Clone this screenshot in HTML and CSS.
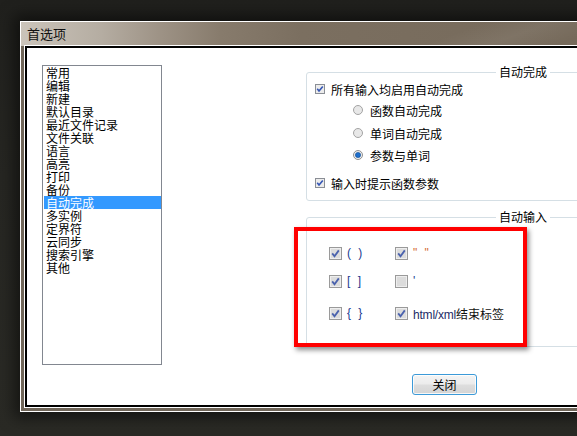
FILE: index.html
```html
<!DOCTYPE html>
<html lang="zh-CN">
<head>
<meta charset="utf-8">
<title>首选项</title>
<link rel="stylesheet" href="styles.css">
</head>
<body>
<div class="window">
  <div class="titlebar">首选项</div>
  <div class="client">
    <ul class="list">
      <li>常用</li>
      <li>编辑</li>
      <li>新建</li>
      <li>默认目录</li>
      <li>最近文件记录</li>
      <li>文件关联</li>
      <li>语言</li>
      <li>高亮</li>
      <li>打印</li>
      <li>备份</li>
      <li class="sel">自动完成</li>
      <li>多实例</li>
      <li>定界符</li>
      <li>云同步</li>
      <li>搜索引擎</li>
      <li>其他</li>
    </ul>
    <div class="right">
      <div class="group g1">
        <span class="legend">自动完成</span>
        <div class="row r1">
          <svg class="cb" width="10" height="10" viewBox="0 0 10 10"><rect x=".5" y=".5" width="9" height="9" fill="#ececec" stroke="#8a8e95"/><path d="M2.2 4.8 L4 6.9 L7.8 2.4" fill="none" stroke="#3556b5" stroke-width="1.6"/></svg>
          <span>所有输入均启用自动完成</span>
        </div>
        <div class="row radio r2">
          <svg class="rd" width="10" height="10" viewBox="0 0 10 10"><circle cx="5" cy="5" r="4.5" fill="#e8e8e8" stroke="#a3a3a3"/></svg>
          <span>函数自动完成</span>
        </div>
        <div class="row radio r3">
          <svg class="rd" width="10" height="10" viewBox="0 0 10 10"><circle cx="5" cy="5" r="4.5" fill="#e8e8e8" stroke="#a3a3a3"/></svg>
          <span>单词自动完成</span>
        </div>
        <div class="row radio r4">
          <svg class="rd" width="10" height="10" viewBox="0 0 10 10"><circle cx="5" cy="5" r="4.5" fill="#eeeeee" stroke="#8f8f8f"/><circle cx="5" cy="5" r="2.6" fill="#1d6fcc" stroke="#0d4a92" stroke-width=".6"/></svg>
          <span>参数与单词</span>
        </div>
        <div class="row r5">
          <svg class="cb" width="10" height="10" viewBox="0 0 10 10"><rect x=".5" y=".5" width="9" height="9" fill="#ececec" stroke="#8a8e95"/><path d="M2.2 4.8 L4 6.9 L7.8 2.4" fill="none" stroke="#3556b5" stroke-width="1.6"/></svg>
          <span>输入时提示函数参数</span>
        </div>
      </div>
      <div class="group g2">
        <span class="legend">自动输入</span>
        <div class="irow i1">
          <div class="cell c1">
            <svg class="cb2" width="13" height="13" viewBox="0 0 13 13"><rect x=".5" y=".5" width="12" height="12" fill="#dcdcdc" stroke="#9a9a9a"/><rect x="1.5" y="1.5" width="10" height="10" fill="none" stroke="#eeeeee"/><path d="M3.2 6.4 L5.5 9.3 L9.8 3.4" fill="none" stroke="#4a62ad" stroke-width="1.8"/></svg>
            <span class="sym">(&nbsp;)</span>
          </div>
          <div class="cell">
            <svg class="cb2" width="13" height="13" viewBox="0 0 13 13"><rect x=".5" y=".5" width="12" height="12" fill="#dcdcdc" stroke="#9a9a9a"/><rect x="1.5" y="1.5" width="10" height="10" fill="none" stroke="#eeeeee"/><path d="M3.2 6.4 L5.5 9.3 L9.8 3.4" fill="none" stroke="#4a62ad" stroke-width="1.8"/></svg>
            <span class="sym quote">"&nbsp;"</span>
          </div>
        </div>
        <div class="irow i2">
          <div class="cell c1">
            <svg class="cb2" width="13" height="13" viewBox="0 0 13 13"><rect x=".5" y=".5" width="12" height="12" fill="#dcdcdc" stroke="#9a9a9a"/><rect x="1.5" y="1.5" width="10" height="10" fill="none" stroke="#eeeeee"/><path d="M3.2 6.4 L5.5 9.3 L9.8 3.4" fill="none" stroke="#4a62ad" stroke-width="1.8"/></svg>
            <span class="sym">[&nbsp;]</span>
          </div>
          <div class="cell">
            <svg class="cb2" width="13" height="13" viewBox="0 0 13 13"><rect x=".5" y=".5" width="12" height="12" fill="#dcdcdc" stroke="#9a9a9a"/><rect x="1.5" y="1.5" width="10" height="10" fill="none" stroke="#eeeeee"/></svg>
            <span class="sym">'</span>
          </div>
        </div>
        <div class="irow i3">
          <div class="cell c1">
            <svg class="cb2" width="13" height="13" viewBox="0 0 13 13"><rect x=".5" y=".5" width="12" height="12" fill="#dcdcdc" stroke="#9a9a9a"/><rect x="1.5" y="1.5" width="10" height="10" fill="none" stroke="#eeeeee"/><path d="M3.2 6.4 L5.5 9.3 L9.8 3.4" fill="none" stroke="#4a62ad" stroke-width="1.8"/></svg>
            <span class="sym">{&nbsp;}</span>
          </div>
          <div class="cell">
            <svg class="cb2" width="13" height="13" viewBox="0 0 13 13"><rect x=".5" y=".5" width="12" height="12" fill="#dcdcdc" stroke="#9a9a9a"/><rect x="1.5" y="1.5" width="10" height="10" fill="none" stroke="#eeeeee"/><path d="M3.2 6.4 L5.5 9.3 L9.8 3.4" fill="none" stroke="#4a62ad" stroke-width="1.8"/></svg>
            <span class="tag"><span class="ascii">html/xml</span>结束标签</span>
          </div>
        </div>
      </div>
      <button class="btn">关闭</button>
    </div>
    <div class="annot"></div>
  </div>
</div>
</body>
</html>
```
FILE: styles.css
```css
html, body {
  margin: 0;
  height: 100%;
}
body {
  background: linear-gradient(180deg, #20201d 0%, #262622 40%, #2a2a25 100%);
  overflow: hidden;
  font-family: "Noto Sans CJK SC", "Liberation Sans", sans-serif;
  font-size: 12px;
  color: #000;
}
.window {
  box-sizing: border-box;
  margin: 21px 0 0 20px;
  width: 600px;
  height: 391px;
  border: 1px solid #fff;
  background: #71675a;
  padding: 0 4px 4px 4px;
  display: flex;
  flex-direction: column;
  box-shadow: 0 0 14px 6px rgba(0, 0, 0, 0.5);
}
.titlebar {
  height: 24px;
  line-height: 23px;
  margin: 0 -4px;
  padding-left: 6px;
  font-size: 13px;
  color: #111;
  background:
    linear-gradient(160deg, rgba(255,255,255,0) 70%, rgba(255,255,255,0.06) 80%, rgba(255,255,255,0) 90%),
    linear-gradient(90deg, #cbc4ba 0px, #b5ada2 80px, #9d9285 140px, #877b6c 200px, #7b6f60 280px, #75695a 100%);
}
.client {
  flex: 1;
  position: relative;
  display: flex;
  align-items: flex-start;
  background: #fff;
  border: 2px solid #000;
  box-shadow: 0 0 0 1px #fff;
  padding: 17px 0 0 15px;
}
.list {
  box-sizing: border-box;
  width: 120px;
  height: 300px;
  margin: 0;
  padding: 0 0 0 1px;
  list-style: none;
  border: 1px solid #828790;
  flex: none;
}
.list li {
  height: 13px;
  line-height: 13px;
  padding-left: 2px;
  white-space: nowrap;
}
.list li.sel {
  background: #3399ff;
  color: #fff;
}
.right {
  flex: none;
  width: 300px;
  margin-left: 144px;
  padding-top: 7px;
  display: flex;
  flex-direction: column;
  align-items: flex-start;
}
.group {
  box-sizing: border-box;
  position: relative;
  width: 300px;
  border: 1px solid #d5dfe5;
  border-radius: 3px;
}
.g1 {
  height: 129px;
}
.g2 {
  height: 130px;
  margin-top: 16px;
  padding-left: 22px;
}
.legend {
  position: absolute;
  top: -8px;
  left: 189px;
  padding: 0 3px;
  background: #fff;
  line-height: 14px;
  white-space: nowrap;
}
.row {
  display: flex;
  align-items: center;
  height: 16px;
  gap: 6px;
  padding-left: 8px;
  white-space: nowrap;
}
.row.radio {
  padding-left: 46px;
  gap: 7px;
}
.r1 { margin-top: 8px; }
.r2 { margin-top: 5px; }
.r3 { margin-top: 7px; }
.r4 { margin-top: 6px; }
.r5 { margin-top: 12px; }
.cb, .rd, .cb2 {
  display: block;
  flex: none;
}
.irow {
  display: flex;
  height: 16px;
  align-items: center;
}
.i1 { margin-top: 27px; }
.i2 { margin-top: 12px; }
.i3 { margin-top: 16px; }
.cell {
  display: flex;
  align-items: center;
  gap: 5px;
  white-space: nowrap;
}
.c1 {
  width: 66px;
}
.sym {
  font-family: "Liberation Sans", sans-serif;
  font-size: 12px;
  color: #1a3a90;
  letter-spacing: 2px;
}
.quote {
  color: #d46a30;
}
.tag {
  font-size: 12px;
  color: #111;
}
.ascii {
  font-family: "Liberation Sans", sans-serif;
  color: #1c2b66;
  letter-spacing: -0.2px;
}
.btn {
  margin-top: 27px;
  margin-left: 106px;
  width: 65px;
  height: 21px;
  padding: 0;
  border: 1px solid #3c9ad8;
  border-radius: 3px;
  background: linear-gradient(180deg, #f4f4f4 0%, #ececec 45%, #dddddd 55%, #d4d4d4 100%);
  box-shadow: inset 0 0 0 1px rgba(255, 255, 255, 0.8);
  font-family: "Noto Sans CJK SC", sans-serif;
  font-size: 12px;
  line-height: 19px;
  color: #000;
}
.annot {
  position: absolute;
  left: 267px;
  top: 179px;
  width: 233px;
  height: 120px;
  box-sizing: border-box;
  border: 4px solid #ff0000;
  box-shadow: 2px 3px 5px rgba(0, 0, 0, 0.45);
}
```
